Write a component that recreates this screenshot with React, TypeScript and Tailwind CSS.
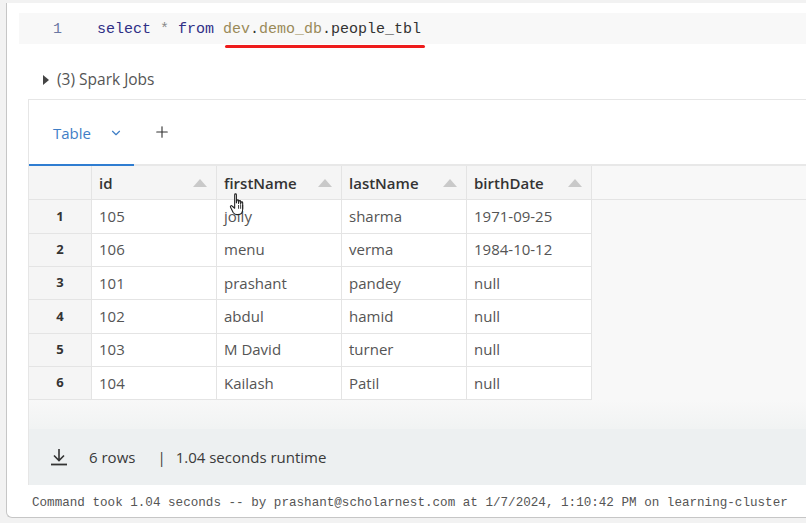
import { ChevronDown, Plus } from 'lucide-react'

const rows = [
  ['105', 'jolly', 'sharma', '1971-09-25'],
  ['106', 'menu', 'verma', '1984-10-12'],
  ['101', 'prashant', 'pandey', 'null'],
  ['102', 'abdul', 'hamid', 'null'],
  ['103', 'M David', 'turner', 'null'],
  ['104', 'Kailash', 'Patil', 'null'],
]

const columns = ['id', 'firstName', 'lastName', 'birthDate']

const ui = { fontFamily: '"Open Sans", "Noto Sans", sans-serif' }
const mono = { fontFamily: '"Liberation Mono", "DejaVu Sans Mono", monospace' }

function SortArrow() {
  return (
    <svg width="14" height="8" viewBox="0 0 14 8" className="shrink-0">
      <path d="M7 0 L14 8 L0 8 Z" fill="#c9c9c9" />
    </svg>
  )
}

function HandCursor() {
  return (
    <svg width="20" height="26" viewBox="0 0 18 24" className="absolute left-[222px] top-[189px]">
      <path
        d="M5 2.5c0-1 1.6-1 1.6 0V10l.4-2c0-1 1.6-1 1.6 0v2.5l.3-1.8c0-1 1.6-1 1.6 0v2.6l.3-1.4c0-1 1.6-1 1.6 0v6c0 3-1.8 5-4.4 5H7c-1.6 0-2.6-.8-3.4-2L1.2 14c-.6-1 .6-1.9 1.4-1.1L5 15V2.5z"
        fill="#fff"
        stroke="#222"
        strokeWidth="1"
        strokeLinejoin="round"
      />
      <path d="M8.6 12v3.5 M10.5 12v3.5 M12.4 12v3.5" stroke="#222" strokeWidth="0.8" />
    </svg>
  )
}

export default function App() {
  return (
    <div className="w-[806px] h-[523px] overflow-hidden bg-[#f2f2f2] pt-[3px]" style={ui}>
      {/* notebook cell */}
      <div className="relative ml-[6px] h-[515px] bg-white border-l border-b border-[#c6c6c6] rounded-bl-[6px] flex flex-col">
        {/* code line */}
        <div className="mt-[10px] ml-[12px] h-[31px] pt-[3px] bg-[#f8f8f8] flex items-center text-[15px]" style={mono}>
          <span className="w-[43px] text-right text-[#6b78a3]">1</span>
          <span className="ml-[35px] text-[#2f2f86]">select</span>
          <span className="text-[#8a8a8a]">&nbsp;*&nbsp;</span>
          <span className="text-[#2f2f86]">from</span>
          <span>&nbsp;</span>
          <span className="text-[#9a8a58]">dev</span>
          <span className="text-[#333]">.</span>
          <span className="text-[#9a8a58]">demo_db</span>
          <span className="text-[#333]">.people_tbl</span>
        </div>
        {/* red annotation underline */}
        <div className="absolute left-[218px] top-[42px] w-[200px] h-[3px] rounded-full bg-[#ee1c1c]" />

        {/* spark jobs */}
        <div className="mt-[24px] ml-[36px] flex items-center gap-[8px] text-[15.5px] text-[#555]">
          <svg width="6" height="10" viewBox="0 0 6 10">
            <path d="M0 0 L6 5 L0 10 Z" fill="#444" />
          </svg>
          <span>(3) Spark Jobs</span>
        </div>

        {/* result panel */}
        <div className="mt-[8px] ml-[21px] flex flex-col border-l border-t border-[#e6e6e6]">
          {/* tabs */}
          <div className="h-[66px] flex items-end border-b-[2px] border-[#e8e8e8]">
            <div className="w-[105px] h-[64px] flex items-center pl-[24px] gap-[18px] border-b-[2px] border-[#2f7dd1] -mb-[2px] text-[#3f7ec6] text-[15px]">
              <span>Table</span>
              <ChevronDown size={14} strokeWidth={2} />
            </div>
            <div className="h-[64px] flex items-center ml-[19px] text-[#333]">
              <Plus size={18} strokeWidth={1.5} />
            </div>
          </div>

          {/* table */}
          <div className="bg-[#f8f8f8] flex flex-col">
            <div className="flex h-[34px] border-b border-[#e4e4e4]">
              <div className="w-[63px] bg-[#f5f5f5] border-r border-[#e4e4e4]" />
              {columns.map((c) => (
                <div
                  key={c}
                  className="w-[125px] bg-[#f5f5f5] border-r border-[#e4e4e4] flex items-center justify-between pl-[7px] pr-[9px] text-[15px] font-semibold text-[#333]"
                >
                  <span>{c}</span>
                  <SortArrow />
                </div>
              ))}
            </div>
            {rows.map((r, i) => (
              <div key={i} className="flex h-[33.33px]">
                <div className="w-[63px] bg-[#f5f5f5] border-r border-b border-[#e4e4e4] flex items-center justify-center text-[13px] font-bold text-[#333]">
                  {i + 1}
                </div>
                {r.map((v, j) => (
                  <div
                    key={j}
                    className="w-[125px] bg-white border-r border-b border-[#e4e4e4] flex items-center pl-[7px] text-[15px] text-[#555]"
                  >
                    {v}
                  </div>
                ))}
              </div>
            ))}
            <div className="h-[29px] bg-gradient-to-b from-[#f8f8f8] to-[#f1f3f3]" />
          </div>

          {/* footer */}
          <div className="h-[56px] bg-[#edf0f1] flex items-center pl-[21px] text-[15px] text-[#3a3a3a]">
            <svg width="18" height="18" viewBox="0 0 18 18" className="text-[#333]">
              <path d="M9 1 V12 M4 7.5 L9 12.5 L14 7.5" fill="none" stroke="currentColor" strokeWidth="1.6" />
              <path d="M1 16.5 H17" stroke="currentColor" strokeWidth="1.8" />
            </svg>
            <span className="ml-[21px]">6 rows</span>
            <span className="ml-[22px]">|</span>
            <span className="ml-[10px]">1.04 seconds runtime</span>
          </div>
        </div>

        {/* command info */}
        <div className="mt-[9px] ml-[25px] text-[12.6px] text-[#555] whitespace-nowrap" style={mono}>
          Command took 1.04 seconds -- by prashant@scholarnest.com at 1/7/2024, 1:10:42 PM on learning-cluster
        </div>

        <HandCursor />
      </div>
    </div>
  )
}
